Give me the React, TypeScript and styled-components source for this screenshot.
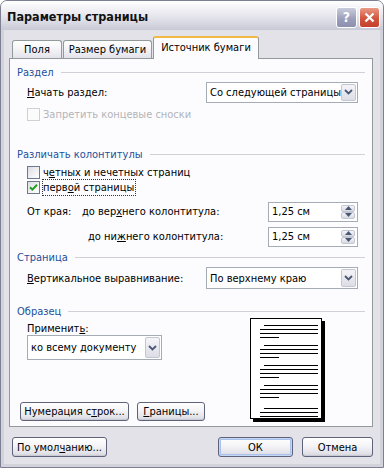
import React from "react";
import styled, { createGlobalStyle, css } from "styled-components";

const GlobalStyle = createGlobalStyle`
  html, body { margin: 0; padding: 0; background: #ffffff; }
  body {
    font-family: "DejaVu Sans Condensed", "DejaVu Sans", sans-serif;
    font-size: 11px;
    color: #000;
  }
`;

const Window = styled.div`
  width: 384px;
  height: 468px;
  box-sizing: border-box;
  display: flex;
  flex-direction: column;
  border: 1px solid #7d7f92;
  border-radius: 7px 7px 0 0;
  overflow: hidden;
  background: #e3e2e8;
`;

const TitleBar = styled.div`
  height: 29px;
  flex: none;
  display: flex;
  align-items: center;
  padding: 0 3px 0 6px;
  background: linear-gradient(#ffffff 0%, #eeeef3 35%, #d9d9e3 75%, #c8c9d6 100%);
`;

const Title = styled.div`
  flex: 1;
  font-weight: bold;
  font-size: 12.5px;
  color: #111;
  padding-top: 2px;
`;

const CaptionButton = styled.div<{ $kind: "help" | "close" }>`
  width: 21px;
  height: 21px;
  box-sizing: border-box;
  margin-left: 2px;
  margin-top: 3px;
  border-radius: 3px;
  border: 1px solid #ffffff;
  display: flex;
  align-items: center;
  justify-content: center;
  color: #fff;
  font-weight: bold;
  font-size: 14px;
  ${(p) =>
    p.$kind === "help"
      ? css`
          background: linear-gradient(#c9cbdc, #9a9db9 60%, #8c8faf);
        `
      : css`
          background: linear-gradient(#e89a86, #d2553e 55%, #c4402c);
        `}
`;

const Body = styled.div`
  flex: 1;
  display: flex;
  flex-direction: column;
  border-left: 3px solid #d2d2da;
  border-right: 3px solid #d2d2da;
  border-bottom: 3px solid #d2d2da;
  padding: 6px 7px 0 5px;
`;

const TabRow = styled.div`
  display: flex;
  align-items: flex-end;
  height: 22px;
  padding-left: 3px;
  gap: 1px;
  position: relative;
  z-index: 1;
`;

const Tab = styled.div<{ $active?: boolean; $width: number }>`
  width: ${(p) => p.$width}px;
  box-sizing: border-box;
  text-align: center;
  border: 1px solid #919b9c;
  border-bottom: none;
  border-radius: 3px 3px 0 0;
  ${(p) =>
    p.$active
      ? css`
          height: 23px;
          margin-bottom: -1px;
          background: #fcfcfe;
          border-top: 2px solid #f0b845;
          padding-top: 3px;
        `
      : css`
          height: 18px;
          padding-top: 2px;
          background: linear-gradient(#ffffff, #f3f3f6 50%, #e2e2ea);
        `}
`;

const Panel = styled.div`
  height: 369px;
  box-sizing: border-box;
  background: #fcfcfe;
  border: 1px solid #919b9c;
  padding: 0 7px 0 7px;
  display: flex;
  flex-direction: column;
`;

const Header = styled.div<{ $top: number }>`
  display: flex;
  align-items: center;
  height: 14px;
  margin-top: ${(p) => p.$top}px;
  color: #22509c;
`;

const Rule = styled.div`
  flex: 1;
  height: 1px;
  background: #d0d0d8;
  margin-left: 7px;
`;

const Group = styled.div`
  display: flex;
  flex-direction: column;
  padding: 0 7px 0 10px;
`;

const Row = styled.div<{ $top: number; $h: number }>`
  display: flex;
  align-items: center;
  justify-content: space-between;
  height: ${(p) => p.$h}px;
  margin-top: ${(p) => p.$top}px;
`;

const Key = styled.span`
  text-decoration: underline;
`;

const SelectBox = styled.div<{ $width: number; $height: number }>`
  width: ${(p) => p.$width}px;
  height: ${(p) => p.$height}px;
  box-sizing: border-box;
  border: 1px solid #a5acb5;
  background: #fff;
  display: flex;
  align-items: stretch;
  padding: 1px;
`;

const SelectText = styled.div`
  flex: 1;
  display: flex;
  align-items: center;
  padding-left: 2px;
  white-space: nowrap;
  overflow: hidden;
`;

const ArrowButton = styled.div`
  width: 15px;
  box-sizing: border-box;
  border: 1px solid #c3c7d3;
  border-radius: 2px;
  background: linear-gradient(#f4f4f8, #dcdde6);
  display: flex;
  align-items: center;
  justify-content: center;
`;

const Select: React.FC<{ width: number; height: number; children: React.ReactNode }> = ({
  width,
  height,
  children,
}) => (
  <SelectBox $width={width} $height={height}>
    <SelectText>{children}</SelectText>
    <ArrowButton>
      <svg width="9" height="6" viewBox="0 0 9 6">
        <path d="M1 1 L4.5 4.5 L8 1" fill="none" stroke="#4a5773" strokeWidth="1.8" />
      </svg>
    </ArrowButton>
  </SelectBox>
);

const CheckRow = styled.div<{ $top: number; $disabled?: boolean }>`
  display: flex;
  align-items: center;
  height: 13px;
  margin-top: ${(p) => p.$top}px;
  color: ${(p) => (p.$disabled ? "#b4b4b8" : "#000")};
`;

const Box = styled.div<{ $disabled?: boolean }>`
  width: 13px;
  height: 13px;
  box-sizing: border-box;
  margin-right: 3px;
  border: 1px solid ${(p) => (p.$disabled ? "#cfcfd6" : "#6f7891")};
  background: ${(p) =>
    p.$disabled ? "#fbfbfc" : "linear-gradient(135deg, #dcdde4, #f6f6f8 70%, #ffffff)"};
  display: flex;
  align-items: center;
  justify-content: center;
`;

const FocusText = styled.span`
  outline: 1px dotted #333;
  outline-offset: 0px;
  padding: 1px 1px 1px 0;
`;

const Check: React.FC<{ checked?: boolean; disabled?: boolean; focus?: boolean; top: number; children: React.ReactNode }> = ({
  checked,
  disabled,
  focus,
  top,
  children,
}) => (
  <CheckRow $top={top} $disabled={disabled}>
    <Box $disabled={disabled}>
      {checked && (
        <svg width="9" height="9" viewBox="0 0 9 9">
          <path d="M1 4.2 L3.4 6.6 L8 1.8" fill="none" stroke="#21a121" strokeWidth="2" />
        </svg>
      )}
    </Box>
    {focus ? <FocusText>{children}</FocusText> : <span>{children}</span>}
  </CheckRow>
);

const Labels = styled.div`
  display: flex;
  align-items: center;
`;

const Label = styled.span<{ $width?: number; $indent?: number }>`
  ${(p) => p.$width !== undefined && `width: ${p.$width}px;`}
  ${(p) => p.$indent !== undefined && `margin-left: ${p.$indent}px;`}
  white-space: nowrap;
`;

const SpinBox = styled.div`
  width: 90px;
  height: 20px;
  box-sizing: border-box;
  border: 1px solid #a5acb5;
  background: #fff;
  display: flex;
  align-items: center;
  padding: 2px 2px 2px 3px;
`;

const SpinText = styled.div`
  flex: 1;
`;

const SpinButtons = styled.div`
  width: 14px;
  height: 14px;
  display: flex;
  flex-direction: column;
`;

const SpinHalf = styled.div`
  flex: 1;
  box-sizing: border-box;
  border: 1px solid #c3c7d3;
  border-radius: 2px;
  background: linear-gradient(#f4f4f8, #d9dae3);
  display: flex;
  align-items: center;
  justify-content: center;
`;

const Spin: React.FC<{ value: string }> = ({ value }) => (
  <SpinBox>
    <SpinText>{value}</SpinText>
    <SpinButtons>
      <SpinHalf>
        <svg width="7" height="4" viewBox="0 0 7 4">
          <path d="M0 4 L3.5 0 L7 4 Z" fill="#4a5773" />
        </svg>
      </SpinHalf>
      <SpinHalf>
        <svg width="7" height="4" viewBox="0 0 7 4">
          <path d="M0 0 L3.5 4 L7 0 Z" fill="#4a5773" />
        </svg>
      </SpinHalf>
    </SpinButtons>
  </SpinBox>
);

const SampleArea = styled.div`
  display: flex;
  justify-content: space-between;
  align-items: flex-start;
`;

const SampleLeft = styled.div`
  display: flex;
  flex-direction: column;
  padding-left: 10px;
`;

const ApplyLabel = styled.div`
  height: 12px;
  line-height: 12px;
  margin-top: 5px;
`;

const PreviewWrap = styled.div`
  margin-right: 39px;
`;

const ButtonRow = styled.div<{ $top: number }>`
  display: flex;
  gap: 8px;
  margin-top: ${(p) => p.$top}px;
  margin-left: -7px;
`;

const Button = styled.div<{ $width: number; $height?: number; $default?: boolean; $gap?: number }>`
  width: ${(p) => p.$width}px;
  height: ${(p) => p.$height ?? 20}px;
  margin-left: ${(p) => p.$gap ?? 0}px;
  box-sizing: border-box;
  border: 1px solid #5f6379;
  border-radius: 3px;
  background: linear-gradient(#ffffff, #f4f4f7 45%, #e1e1e8 85%, #d2d3dc);
  display: flex;
  align-items: center;
  justify-content: center;
  white-space: nowrap;
  box-shadow: ${(p) =>
    p.$default ? "inset 0 0 0 1px #c4d6f4, inset 0 0 0 2px #a9c3ee" : "inset 0 -1px 0 #c9cad4"};
`;

const Footer = styled.div`
  display: flex;
  align-items: center;
  margin-top: 10px;
  padding-left: 3px;
`;

const Spacer = styled.div`
  flex: 1;
`;

const PagePreview: React.FC = () => {
  const groups = [7, 27, 47, 67];
  return (
    <svg width="76" height="105" viewBox="0 0 76 105" shapeRendering="crispEdges">
      <rect x="3" y="3" width="72" height="101" fill="#000" />
      <rect x="0.5" y="0.5" width="71" height="100" fill="#fff" stroke="#000" />
      {groups.map((y) => (
        <g key={y} fill="#000">
          <rect x="14" y={y} width="54" height="1" />
          <rect x="10" y={y + 4} width="58" height="1" />
          <rect x="10" y={y + 8} width="58" height="1" />
          <rect x="10" y={y + 12} width="19" height="1" />
        </g>
      ))}
      <g fill="#000">
        <rect x="14" y="90" width="54" height="1" />
        <rect x="10" y="94" width="58" height="1" />
        <rect x="10" y="98" width="58" height="1" />
      </g>
    </svg>
  );
};

const App: React.FC = () => {
  return (
    <>
      <GlobalStyle />
      <Window>
        <TitleBar>
          <Title>Параметры страницы</Title>
          <CaptionButton $kind="help">?</CaptionButton>
          <CaptionButton $kind="close">
            <svg width="11" height="11" viewBox="0 0 11 11">
              <path d="M1.5 1.5 L9.5 9.5 M9.5 1.5 L1.5 9.5" stroke="#fff" strokeWidth="2.2" />
            </svg>
          </CaptionButton>
        </TitleBar>
        <Body>
          <TabRow>
            <Tab $width={50}>Поля</Tab>
            <Tab $width={89}>Размер бумаги</Tab>
            <Tab $width={106} $active>
              Источник бумаги
            </Tab>
          </TabRow>
          <Panel>
            <Header $top={7}>
              Раздел
              <Rule />
            </Header>
            <Group>
              <Row $top={2} $h={21}>
                <Label>
                  <Key>Н</Key>ачать раздел:
                </Label>
                <Select width={152} height={21}>
                  Со следующей страницы
                </Select>
              </Row>
              <Check top={5} disabled>
                Запретить концевые сноски
              </Check>
            </Group>

            <Header $top={27}>
              Различать колонтитулы
              <Rule />
            </Header>
            <Group>
              <Check top={4}>
                ч<Key>е</Key>тных и нечетных страниц
              </Check>
              <Check top={2} checked focus>
                перв<Key>о</Key>й страницы
              </Check>
              <Row $top={8} $h={20}>
                <Labels>
                  <Label $width={55}>От края:</Label>
                  <Label>
                    до вер<Key>х</Key>него колонтитула:
                  </Label>
                </Labels>
                <Spin value="1,25 см" />
              </Row>
              <Row $top={5} $h={20}>
                <Labels>
                  <Label $indent={61}>
                    до ни<Key>ж</Key>него колонтитула:
                  </Label>
                </Labels>
                <Spin value="1,25 см" />
              </Row>
            </Group>

            <Header $top={4}>
              Страница
              <Rule />
            </Header>
            <Group>
              <Row $top={3} $h={22}>
                <Label>
                  <Key>В</Key>ертикальное выравнивание:
                </Label>
                <Select width={152} height={22}>
                  По верхнему краю
                </Select>
              </Row>
            </Group>

            <Header $top={15}>
              Образец
              <Rule />
            </Header>
            <SampleArea>
              <SampleLeft>
                <ApplyLabel>
                  Применит<Key>ь</Key>:
                </ApplyLabel>
                <Select width={135} height={25}>
                  ко всему документу
                </Select>
                <ButtonRow $top={42}>
                  <Button $width={109} $height={19}>
                    Нумерация с<Key>т</Key>рок...
                  </Button>
                  <Button $width={68} $height={19}>
                    <Key>Г</Key>раницы...
                  </Button>
                </ButtonRow>
              </SampleLeft>
              <PreviewWrap>
                <PagePreview />
              </PreviewWrap>
            </SampleArea>
          </Panel>
          <Footer>
            <Button $width={95}>
              По умол<Key>ч</Key>анию...
            </Button>
            <Spacer />
            <Button $width={75} $default>
              ОК
            </Button>
            <Button $width={71} $gap={9}>
              Отмена
            </Button>
          </Footer>
        </Body>
      </Window>
    </>
  );
};

export default App;
